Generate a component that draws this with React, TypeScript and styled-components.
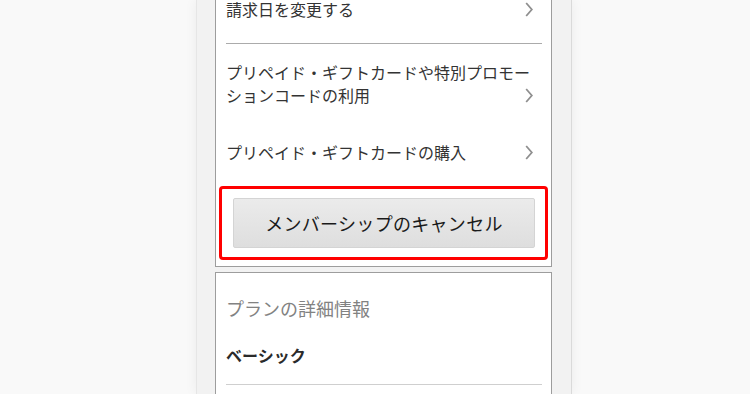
import React from "react";
import styled, { createGlobalStyle } from "styled-components";

const Global = createGlobalStyle`
  html, body {
    margin: 0;
    padding: 0;
    height: 100%;
    overflow: hidden;
    background: #f9f9f9;
  }
  body {
    font-family: "Noto Sans CJK JP", "Noto Sans", sans-serif;
  }
`;

const Page = styled.div`
  display: flex;
  height: 394px;
  overflow: hidden;
`;

const Column = styled.div`
  margin-left: 196px;
  width: 376px;
  box-sizing: border-box;
  background: #f2f2f2;
  border-left: 1px solid #e6e6e6;
  border-right: 1px solid #dadada;
  box-shadow: 0 0 12px rgba(0, 0, 0, 0.06);
  padding: 0 19px 0 18px;
  display: flex;
  flex-direction: column;
  gap: 5px;
`;

const Card = styled.section<{ $offset?: number; $tail?: number }>`
  width: 337px;
  box-sizing: border-box;
  background: #fff;
  border: 1px solid #9d9d9d;
  padding: 0 9px ${(p) => p.$tail ?? 0}px 10px;
  margin-top: ${(p) => (p.$offset ? `${p.$offset}px` : "0")};
  display: flex;
  flex-direction: column;
  flex-shrink: 0;
`;

const Item = styled.div`
  display: grid;
  padding: 17px 0;
  color: #333;
  font-size: 16px;
  line-height: 23px;
`;

const ItemText = styled.span`
  grid-area: 1 / 1;
`;

const Chevron = styled.svg`
  grid-area: 1 / 1;
  justify-self: end;
  align-self: end;
  width: 8px;
  height: 15px;
  margin-right: 9px;
  margin-bottom: 4px;
`;

const Divider = styled.div<{ $light?: boolean; $top?: number }>`
  height: 1px;
  flex-shrink: 0;
  background: ${(p) => (p.$light ? "#cfcfcf" : "#ababab")};
  margin-top: ${(p) => p.$top ?? 0}px;
`;

const Highlight = styled.div`
  margin: 5px -6px 6px -7px;
  border: 3px solid #ff0000;
  border-radius: 4px;
  padding: 9px 10px 9px 11px;
`;

const CancelButton = styled.button`
  display: block;
  width: 100%;
  height: 50px;
  border: 1px solid #d4d4d4;
  border-radius: 2px;
  background: linear-gradient(#ebebeb, #dedede);
  color: #1a1a1a;
  font-family: "Noto Sans CJK JP", "Noto Sans", sans-serif;
  font-size: 18px;
  letter-spacing: 0.3px;
  cursor: pointer;
`;

const SectionTitle = styled.h2`
  margin: 22px 0 0;
  font-size: 18px;
  line-height: 26px;
  font-weight: 400;
  color: #828282;
`;

const PlanName = styled.div`
  margin-top: 22px;
  font-size: 16px;
  line-height: 24px;
  font-weight: 700;
  color: #2a2a2a;
`;

const ChevronIcon = () => (
  <Chevron viewBox="0 0 8 15" aria-hidden>
    <path d="M1.2 1 L6.8 7.5 L1.2 14" fill="none" stroke="#8f8f8f" strokeWidth="1.8" />
  </Chevron>
);

const MenuItem = ({ children }: { children: React.ReactNode }) => (
  <Item>
    <ItemText>{children}</ItemText>
    <ChevronIcon />
  </Item>
);

export default function App() {
  return (
    <>
      <Global />
      <Page>
        <Column>
          <Card $offset={-20}>
            <MenuItem>請求日を変更する</MenuItem>
            <Divider $top={5} />
            <MenuItem>プリペイド・ギフトカードや特別プロモーションコードの利用</MenuItem>
            <MenuItem>プリペイド・ギフトカードの購入</MenuItem>
            <Highlight>
              <CancelButton>メンバーシップのキャンセル</CancelButton>
            </Highlight>
          </Card>
          <Card $tail={60}>
            <SectionTitle>プランの詳細情報</SectionTitle>
            <PlanName>ベーシック</PlanName>
            <Divider $light $top={17} />
          </Card>
        </Column>
      </Page>
    </>
  );
}
